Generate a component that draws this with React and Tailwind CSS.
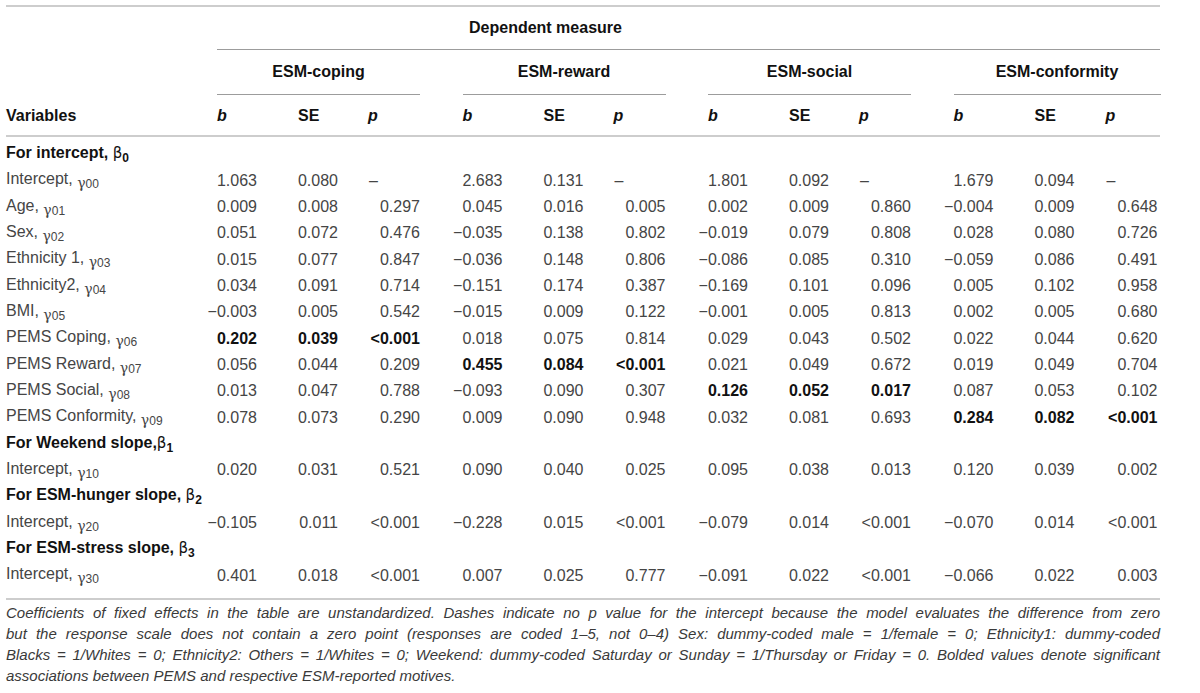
import React from 'react'

const COLS =
  'grid grid-cols-[211px_81px_70px_94.5px_81px_70px_94.5px_81px_70px_94.5px_81px_71px_55px]'

const groups = ['ESM-coping', 'ESM-reward', 'ESM-social', 'ESM-conformity']

// '*' marks a bolded value
const rows = [
  { section: 'For intercept, ', greek: 'β', sub: '0' },
  { label: 'Intercept, ', sub: '00', vals: ['1.063', '0.080', '–', '2.683', '0.131', '–', '1.801', '0.092', '–', '1.679', '0.094', '–'] },
  { label: 'Age, ', sub: '01', vals: ['0.009', '0.008', '0.297', '0.045', '0.016', '0.005', '0.002', '0.009', '0.860', '−0.004', '0.009', '0.648'] },
  { label: 'Sex, ', sub: '02', vals: ['0.051', '0.072', '0.476', '−0.035', '0.138', '0.802', '−0.019', '0.079', '0.808', '0.028', '0.080', '0.726'] },
  { label: 'Ethnicity 1, ', sub: '03', vals: ['0.015', '0.077', '0.847', '−0.036', '0.148', '0.806', '−0.086', '0.085', '0.310', '−0.059', '0.086', '0.491'] },
  { label: 'Ethnicity2, ', sub: '04', vals: ['0.034', '0.091', '0.714', '−0.151', '0.174', '0.387', '−0.169', '0.101', '0.096', '0.005', '0.102', '0.958'] },
  { label: 'BMI, ', sub: '05', vals: ['−0.003', '0.005', '0.542', '−0.015', '0.009', '0.122', '−0.001', '0.005', '0.813', '0.002', '0.005', '0.680'] },
  { label: 'PEMS Coping, ', sub: '06', vals: ['*0.202', '*0.039', '*<0.001', '0.018', '0.075', '0.814', '0.029', '0.043', '0.502', '0.022', '0.044', '0.620'] },
  { label: 'PEMS Reward, ', sub: '07', vals: ['0.056', '0.044', '0.209', '*0.455', '*0.084', '*<0.001', '0.021', '0.049', '0.672', '0.019', '0.049', '0.704'] },
  { label: 'PEMS Social, ', sub: '08', vals: ['0.013', '0.047', '0.788', '−0.093', '0.090', '0.307', '*0.126', '*0.052', '*0.017', '0.087', '0.053', '0.102'] },
  { label: 'PEMS Conformity, ', sub: '09', vals: ['0.078', '0.073', '0.290', '0.009', '0.090', '0.948', '0.032', '0.081', '0.693', '*0.284', '*0.082', '*<0.001'] },
  { section: 'For Weekend slope,', greek: 'β', sub: '1' },
  { label: 'Intercept, ', sub: '10', vals: ['0.020', '0.031', '0.521', '0.090', '0.040', '0.025', '0.095', '0.038', '0.013', '0.120', '0.039', '0.002'] },
  { section: 'For ESM-hunger slope, ', greek: 'β', sub: '2' },
  { label: 'Intercept, ', sub: '20', vals: ['−0.105', '0.011', '<0.001', '−0.228', '0.015', '<0.001', '−0.079', '0.014', '<0.001', '−0.070', '0.014', '<0.001'] },
  { section: 'For ESM-stress slope, ', greek: 'β', sub: '3' },
  { label: 'Intercept, ', sub: '30', vals: ['0.401', '0.018', '<0.001', '0.007', '0.025', '0.777', '−0.091', '0.022', '<0.001', '−0.066', '0.022', '0.003'] },
]

function Value({ v, isP }) {
  const bold = v.startsWith('*')
  const text = bold ? v.slice(1) : v
  if (text === '–') return <div className="pl-[1px]">–</div>
  return (
    <div
      className={`flex justify-end whitespace-nowrap ${isP ? 'w-[52px]' : 'w-[40px]'} ${
        bold ? 'font-bold text-[#111]' : ''
      }`}
    >
      {text}
    </div>
  )
}

function Footnote() {
  const lines = [
    'Coefficients of fixed effects in the table are unstandardized. Dashes indicate no p value for the intercept because the model evaluates the difference from zero',
    'but the response scale does not contain a zero point (responses are coded 1–5, not 0–4) Sex: dummy-coded male = 1/female = 0; Ethnicity1: dummy-coded',
    'Blacks = 1/Whites = 0; Ethnicity2: Others = 1/Whites = 0; Weekend: dummy-coded Saturday or Sunday = 1/Thursday or Friday = 0. Bolded values denote significant',
  ]
  return (
    <div className="pt-[2px] text-[15px] italic leading-[21px] text-[#3a3a3a]">
      {lines.map((l) => (
        <div key={l} className="text-justify [text-align-last:justify] whitespace-nowrap">
          {l}
        </div>
      ))}
      <div>associations between PEMS and respective ESM-reported motives.</div>
    </div>
  )
}

export default function App() {
  return (
    <div className="min-h-screen bg-white font-['Liberation_Sans',Arial,sans-serif] text-[16px] text-[#454545]">
      <div className="ml-[6px] w-[1154px] pt-[5px]">
        <div className="border-t-2 border-[#cdcdcd]">
          {/* Dependent measure */}
          <div className="flex h-[42px] items-center pl-[463px] font-bold text-[#111]">Dependent measure</div>
          <div className="ml-[211px] border-t border-[#9c9c9c]" />

          {/* group headings */}
          <div className={`${COLS} h-[45px]`}>
            <div />
            {groups.map((g, i) => (
              <div key={g} className="col-span-3">
                <div
                  className={`flex h-full items-center justify-center border-b border-[#9c9c9c] font-bold text-[#111] ${
                    i === 3 ? 'w-[207px]' : 'w-[203px]'
                  }`}
                >
                  {g}
                </div>
              </div>
            ))}
          </div>

          {/* column headings */}
          <div className={`${COLS} h-[42px] items-center border-b-2 border-[#cdcdcd] pt-[2px] font-bold text-[#111]`}>
            <div>Variables</div>
            {groups.map((g) => (
              <React.Fragment key={g}>
                <div className="italic">b</div>
                <div>SE</div>
                <div className="italic">p</div>
              </React.Fragment>
            ))}
          </div>

          {/* body */}
          <div className="border-b-2 border-[#cdcdcd] pt-[4px] pb-[9px]">
            {rows.map((r, i) =>
              r.section ? (
                <div key={i} className="flex h-[26.33px] items-center font-bold text-[#111]">
                  <span>
                    {r.section}
                    <span className="font-['DejaVu_Sans',sans-serif] text-[15px] font-normal">{r.greek}</span>
                    <span className="align-[-4px] text-[12px]">{r.sub}</span>
                  </span>
                </div>
              ) : (
                <div key={i} className={`${COLS} h-[26.33px] items-center`}>
                  <div className="whitespace-nowrap">
                    {r.label}
                    <span className="align-[-4px] font-['DejaVu_Serif',serif] text-[14px]">γ</span>
                    <span className="align-[-4px] text-[12px]">{r.sub}</span>
                  </div>
                  {r.vals.map((v, j) => (
                    <Value key={j} v={v} isP={j % 3 === 2} />
                  ))}
                </div>
              )
            )}
          </div>

          <Footnote />
        </div>
      </div>
    </div>
  )
}
